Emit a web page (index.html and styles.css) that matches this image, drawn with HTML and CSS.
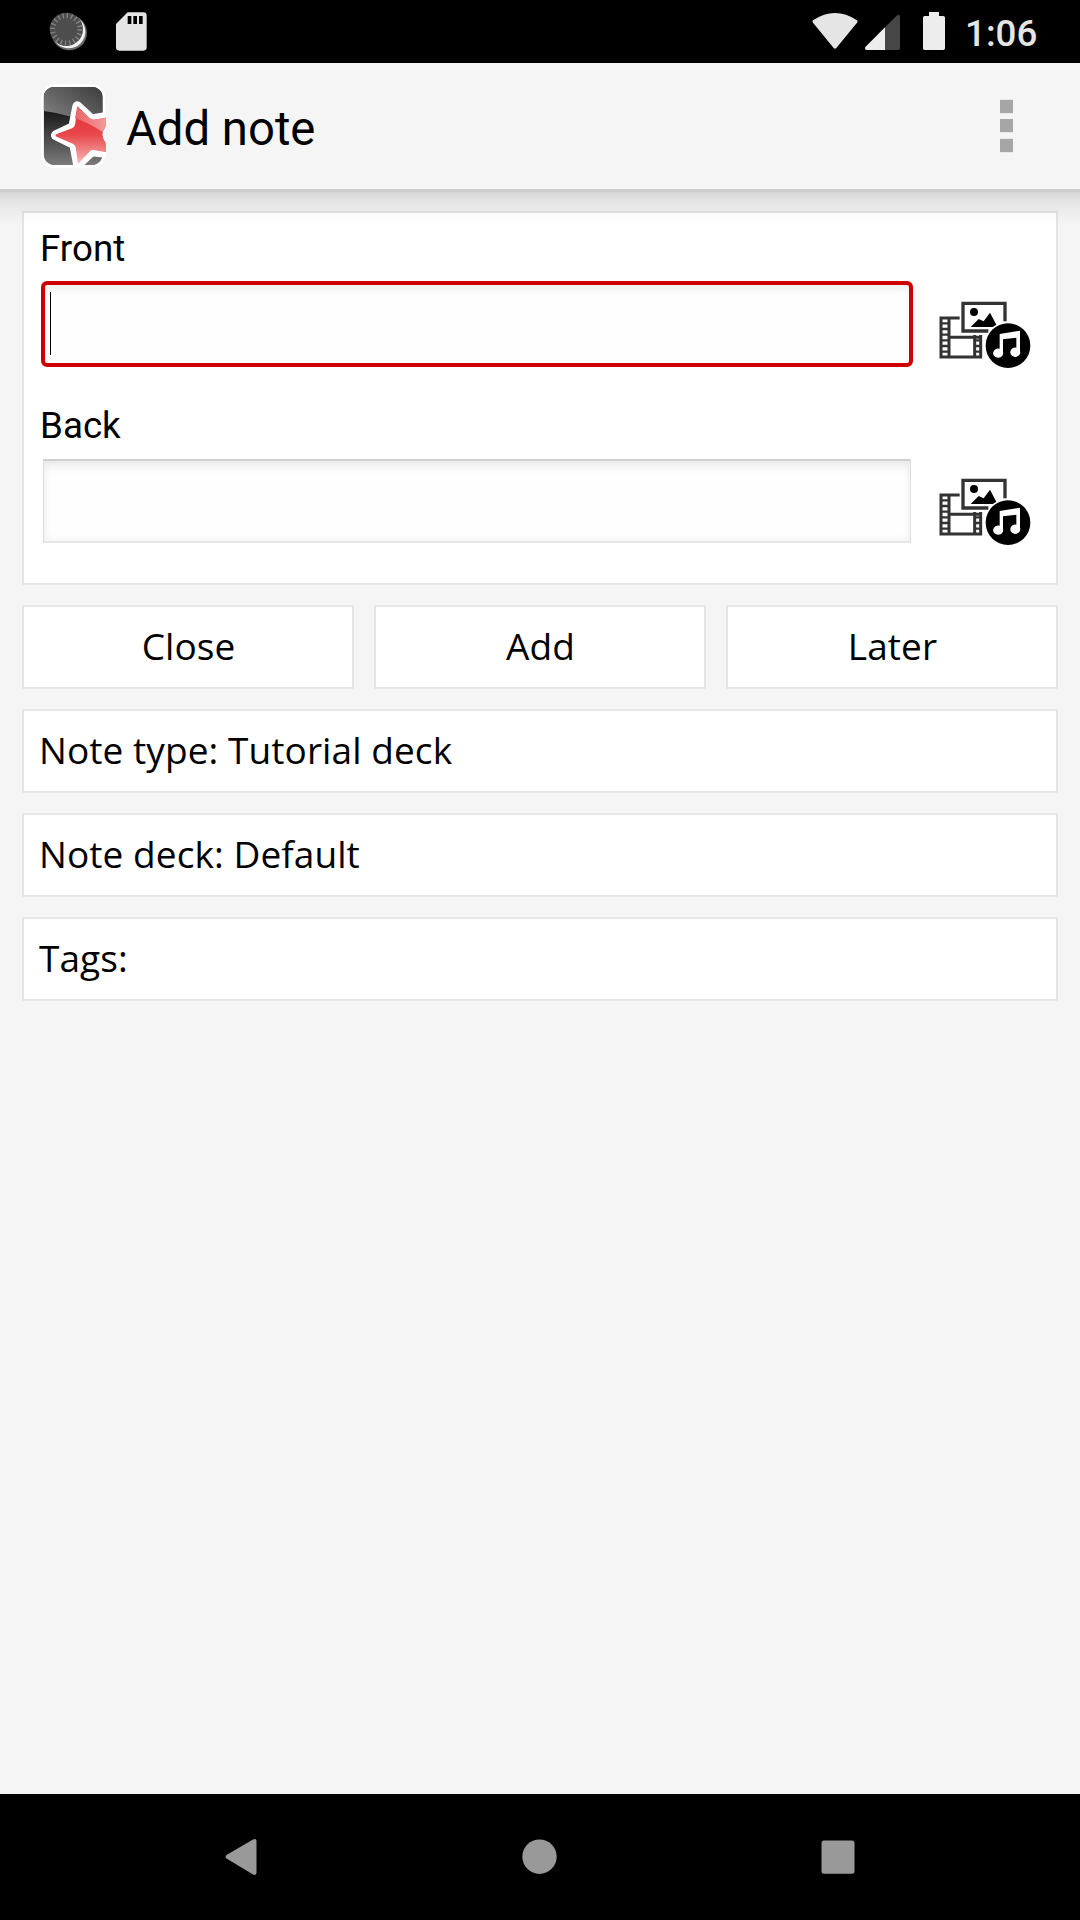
FILE: index.html
```html
<!DOCTYPE html>
<html lang="en">
<head>
<meta charset="utf-8">
<title>Add note</title>
<link rel="stylesheet" href="styles.css">
</head>
<body>
<div class="screen">
  <div class="status-bar">
    <div class="status-left">
      <svg class="sync-icon" width="40" height="42" viewBox="144 30 120 126">
        <circle cx="208" cy="98" r="53" fill="#6b6b6b"/>
        <circle cx="206" cy="95" r="50" fill="#f0f0f0"/>
        <circle cx="199" cy="88" r="50" fill="#4d4d4d"/>
        <circle cx="199" cy="88" r="41" fill="none" stroke="#858585" stroke-width="15" stroke-dasharray="4 8.88"/>
      </svg>
      <svg class="sd-icon" width="33" height="41" viewBox="345 33 99 123">
        <path fill="#e5e5e5" fill-rule="evenodd" d="M383 37H430Q440 37 440 47V142Q440 152 430 152H358Q348 152 348 142V72ZM383 48V72H394V48ZM400 48V72H411V48ZM417 48V72H428V48Z"/>
      </svg>
    </div>
    <div class="status-right">
      <svg class="wifi-icon" width="46" height="40" viewBox="96 33 138 120">
        <path fill="#e5e5e5" d="M99 61Q165 17 231 61Q234 64 231 68L169 144Q165 149 161 144L99 68Q96 64 99 61Z"/>
      </svg>
      <svg class="signal-icon" width="37" height="40" viewBox="252 33 111 120">
        <path fill="#464646" d="M315 82L350 47Q360 40 360 51V145Q360 150 355 150H315Z"/>
        <path fill="#ededed" d="M315 82V150H259Q253 148 256 141Z"/>
      </svg>
      <svg class="battery-icon" width="24" height="40" viewBox="426 33 72 120">
        <path fill="#ededed" d="M447 36H477V48H490Q495 48 495 53V145Q495 150 490 150H434Q429 150 429 145V53Q429 48 434 48H447Z"/>
      </svg>
      <span class="clock">1:06</span>
    </div>
  </div>

  <header class="app-bar">
    <svg class="app-icon" width="68" height="86" viewBox="120 249 204 258">
      <defs>
        <linearGradient id="tileTop" x1="0" y1="1" x2="1" y2="0"><stop offset="0" stop-color="#8c8c8c"/><stop offset="1" stop-color="#3c3c3c"/></linearGradient>
        <linearGradient id="tileBottom" x1="0" y1="0" x2="0" y2="1"><stop offset=".3" stop-color="#181818"/><stop offset="1" stop-color="#7a7a7a"/></linearGradient>
        <linearGradient id="starFill" x1="0" y1="0" x2="0" y2="1"><stop offset=".2" stop-color="#e63439"/><stop offset=".5" stop-color="#e84a4d"/><stop offset="1" stop-color="#f8b9b9"/></linearGradient>
        <linearGradient id="starShine" x1="0" y1="0" x2="1" y2="0"><stop offset="0" stop-color="#ea6063"/><stop offset="1" stop-color="#f3a0a1"/></linearGradient>
        <clipPath id="tileClip"><rect x="131" y="261" width="177" height="234" rx="32"/></clipPath>
        <clipPath id="iconClip"><rect x="120" y="249" width="198" height="254"/></clipPath>
        <clipPath id="starClip"><path d="M232 319L269 355Q274 360 282 359L330 351L305 402L330 459L275 449L234 492L223 433L165 406L220 379Z"/></clipPath>
      </defs>
      <rect x="123" y="253" width="193" height="250" rx="40" fill="#fff"/>
      <g clip-path="url(#tileClip)">
        <rect x="131" y="261" width="177" height="234" fill="url(#tileBottom)"/>
        <path d="M131 261H308V388Q220 343 131 333Z" fill="url(#tileTop)"/>
      </g>
      <g clip-path="url(#iconClip)">
        <path d="M232 319L274 358L330 349L311 402L330 459L275 454L234 492L223 433L168 406L220 381Z" fill="#fff" stroke="#fff" stroke-width="30" stroke-linejoin="round"/>
        <path d="M232 319L269 355Q274 360 282 359L330 351L309 396Q306 403 309 410L330 459L280 450Q274 449 270 454L234 492L227 442Q226 434 218 431L170 410Q163 406 170 402L218 384Q225 381 226 370Z" fill="url(#starFill)"/>
        <path d="M215 352Q265 367 309 397L330 390V300H215Z" fill="url(#starShine)" clip-path="url(#starClip)"/>
        <ellipse cx="319" cy="405" rx="10" ry="20" fill="#fff"/>
      </g>
    </svg>
    <h1 class="app-title">Add note</h1>
    <svg class="overflow-icon" width="13" height="54" viewBox="0 0 13 54">
      <path fill="#e9e9e9" d="M0 0H13V15H0ZM0 20H13V34H0ZM0 39H13V54H0Z"/>
      <path fill="#a6a6a6" d="M0 1H13V14H0ZM0 20H13V33H0ZM0 40H13V53H0Z"/>
    </svg>
  </header>

  <svg class="symbols">
    <symbol id="media" viewBox="171 117 288 216">
      <g fill="none" stroke="#333" stroke-width="9">
        <path d="M239 174H183V291H302V225M207 174V291M284 225V291M207 232H302"/>
        <path stroke-width="7" d="M183 190H207M183 207H207M183 224H207M183 241H207M183 258H207M183 275H207M284 241H302M284 258H302M284 275H302"/>
        <path stroke-width="10" d="M375 184V130H249V213H325"/>
      </g>
      <circle cx="282" cy="156" r="12"/>
      <path d="M272 201L296 177L311 184L330 158L349 194L338 201Z"/>
      <circle cx="384" cy="257" r="67"/>
      <path fill="#fff" d="M359 222L420 212V272A15 14 0 1 1 409 263V233L369 238V276A15 14 0 1 1 359 266Z"/>
    </symbol>
  </svg>

  <main class="content">
    <section class="panel fields">
      <div class="field">
        <label class="field-label">Front</label>
        <div class="field-row">
          <div class="input focused"><span class="caret"></span></div>
          <svg class="media-icon" width="96" height="72"><use href="#media"/></svg>
        </div>
      </div>
      <div class="field">
        <label class="field-label">Back</label>
        <div class="field-row">
          <div class="input plain"></div>
          <svg class="media-icon" width="96" height="72"><use href="#media"/></svg>
        </div>
      </div>
    </section>
    <div class="actions">
      <div class="panel button">Close</div>
      <div class="panel button">Add</div>
      <div class="panel button">Later</div>
    </div>
    <div class="panel option">Note type: Tutorial deck</div>
    <div class="panel option">Note deck: Default</div>
    <div class="panel option">Tags:</div>
  </main>

  <nav class="nav-bar">
    <svg width="36" height="40" viewBox="0 0 36 40"><path fill="#999" d="M2.500 17L29 1.500Q32.400 0 32.500 3V34.500Q32.400 38 29 36.500L2.500 20.500Q0.500 19 2.500 17Z"/></svg>
    <svg width="36" height="40" viewBox="0 0 36 40"><circle cx="17.500" cy="18.700" r="17.200" fill="#999"/></svg>
    <svg width="36" height="40" viewBox="0 0 36 40"><rect x="1.500" y="2.500" width="33" height="33.200" rx="2.500" fill="#999"/></svg>
  </nav>
</div>
</body>
</html>
```

FILE: styles.css
```css
* {
  box-sizing: border-box;
}

body {
  margin: 0;
  background: #f5f5f5;
  color: #000;
  font-family: Roboto, sans-serif;
}

svg {
  display: block;
  flex: none;
}

.screen {
  display: flex;
  flex-direction: column;
  width: 1080px;
  height: 1920px;
  overflow: hidden;
}

.status-bar {
  display: flex;
  justify-content: space-between;
  height: 63px;
  padding: 0 42px 0 48px;
  background: #000;
}

.status-left,
.status-right {
  display: flex;
}

.status-left {
  gap: 27px;
  padding-top: 10px;
}

.sd-icon {
  margin-top: 1px;
}

.status-right {
  padding-top: 11px;
}

.wifi-icon {
  margin-right: 6px;
}

.signal-icon {
  margin-right: 21px;
}

.battery-icon {
  margin-right: 19px;
}

.clock {
  width: 73px;
  padding-top: 1px;
  color: #e5e5e5;
  font-size: 36.75px;
  font-weight: 500;
  line-height: 44px;
  white-space: nowrap;
}

.app-bar {
  display: flex;
  align-items: center;
  height: 126px;
  padding: 0 67px 0 40px;
  background: #f5f5f5;
}

.app-title {
  flex: 1;
  margin: 0 0 0 18px;
  padding-top: 6px;
  font-size: 47.25px;
  font-weight: 400;
  line-height: 56px;
}

.symbols {
  width: 0;
  height: 0;
}

.content {
  position: relative;
  flex: 1;
  display: flex;
  flex-direction: column;
  gap: 20px;
  padding: 22px 22px 0;
}

/* Shadow cast by the app bar over the top of the content */
.content::before {
  content: "";
  position: absolute;
  inset: 0 0 auto;
  height: 36px;
  background: linear-gradient(rgba(0, 0, 0, .16) 0 3px, rgba(0, 0, 0, .125) 3px, rgba(0, 0, 0, .065) 12px, rgba(0, 0, 0, .04) 22px, rgba(0, 0, 0, 0) 36px);
  clip-path: polygon(0 0, 100% 0, 100% 100%, 1056px 100%, 1056px 24px, 24px 24px, 24px 100%, 0 100%);
}

.panel {
  border: 2px solid #e6e6e6;
  background: #fff;
}

.fields {
  display: flex;
  flex-direction: column;
  gap: 23px;
  height: 374px;
  padding-left: 17px;
  background: linear-gradient(#fbfbfb, #fff 12px);
}

.field-label {
  display: block;
  height: 68px;
  margin-left: -1px;
  padding-top: 4px;
  font-size: 36.75px;
  line-height: 64px;
}

.field-row {
  display: flex;
  gap: 24px;
  height: 86px;
}

.input {
  width: 872px;
  height: 86px;
}

.focused {
  padding: 7px 5px;
  border: 4px solid #d00000;
  border-radius: 6px;
  background: #fefefe;
  box-shadow: inset 0 6px 9px -3px #e9e9e9;
}

.caret {
  display: block;
  width: 1px;
  height: 63px;
  background: #000;
}

.plain {
  width: 868px;
  height: 84px;
  margin: 1px 2px;
  border: 1px solid #dcdcdc;
  border-top: 2px solid #cfcfcf;
  border-bottom: 2px solid #e6e6e6;
  background: #fefefe;
  box-shadow: inset 0 8px 10px -3px #e9e9e9, inset 0 0 9px #f0f0f0;
}

.media-icon {
  margin-top: 18px;
}

.actions {
  display: grid;
  grid-template-columns: repeat(3, 1fr);
  gap: 20px;
}

.button,
.option {
  height: 84px;
  font-family: "Open Sans", sans-serif;
  font-size: 37px;
  letter-spacing: .08px;
  line-height: 77px;
}

.button {
  padding-left: 1px;
  text-align: center;
}

.option {
  padding-left: 15px;
}

.nav-bar {
  display: flex;
  justify-content: space-between;
  height: 126px;
  padding: 44px 224px 0 224px;
  background: #000;
}
```
